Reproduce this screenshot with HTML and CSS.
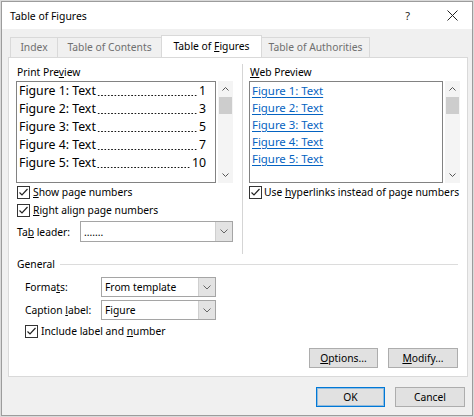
FILE: index.html
```html
<!DOCTYPE html>
<html lang="en">
<head>
    <meta charset="UTF-8">
    <title>Table of Figures</title>
    <link rel="stylesheet" href="styles.css">
</head>
<body>
    <div class="dialog">
        <div class="title-bar">
            <span class="title">Table of Figures</span>
            <div class="title-buttons">
                <span class="help">?</span>
                <svg class="close" width="11" height="11" viewBox="0 0 11 11">
                    <path d="M0.5 0.5L10.5 10.5M10.5 0.5L0.5 10.5" stroke="#222" stroke-width="1" fill="none"/>
                </svg>
            </div>
        </div>

        <div class="dialog-body">
            <div class="tabs">
                <div class="tab tab-index">Index</div>
                <div class="tab tab-contents">Table of Contents</div>
                <div class="tab tab-figures active">Table of <u>F</u>igures</div>
                <div class="tab tab-authorities">Table of Authorities</div>
            </div>

            <div class="panel">
                <div class="previews">
                    <div class="preview-col print-col">
                        <div class="label">Print Pre<u>v</u>iew</div>
                        <div class="preview-box">
                            <div class="list print-list">
                                <div class="entry"><span>Figure 1: Text</span><span class="leader"></span><span>1</span></div>
                                <div class="entry"><span>Figure 2: Text</span><span class="leader"></span><span>3</span></div>
                                <div class="entry"><span>Figure 3: Text</span><span class="leader"></span><span>5</span></div>
                                <div class="entry"><span>Figure 4: Text</span><span class="leader"></span><span>7</span></div>
                                <div class="entry"><span>Figure 5: Text</span><span class="leader"></span><span>10</span></div>
                            </div>
                            <div class="scrollbar">
                                <div class="scroll-btn">
                                    <svg width="7" height="4" viewBox="0 0 7 4"><polyline points="0.5,3.5 3.5,0.5 6.5,3.5" stroke="#555" fill="none"/></svg>
                                </div>
                                <div class="scroll-thumb"></div>
                                <div class="scroll-track"></div>
                                <div class="scroll-btn">
                                    <svg width="7" height="4" viewBox="0 0 7 4"><polyline points="0.5,0.5 3.5,3.5 6.5,0.5" stroke="#555" fill="none"/></svg>
                                </div>
                            </div>
                        </div>
                        <div class="check-row">
                            <svg class="checkbox" width="13" height="13" viewBox="0 0 13 13"><rect x="0.5" y="0.5" width="12" height="12" fill="#fff" stroke="#333"/><polyline points="2.5,6.5 5,9 10.5,3" stroke="#222" stroke-width="1.2" fill="none"/></svg>
                            <span><u>S</u>how page numbers</span>
                        </div>
                        <div class="check-row">
                            <svg class="checkbox" width="13" height="13" viewBox="0 0 13 13"><rect x="0.5" y="0.5" width="12" height="12" fill="#fff" stroke="#333"/><polyline points="2.5,6.5 5,9 10.5,3" stroke="#222" stroke-width="1.2" fill="none"/></svg>
                            <span><u>R</u>ight align page numbers</span>
                        </div>
                        <div class="leader-row">
                            <span class="leader-label">Ta<u>b</u> leader:</span>
                            <div class="select">
                                <span class="select-value">.......</span>
                                <span class="select-arrow">
                                    <svg width="8" height="5" viewBox="0 0 8 5"><polyline points="0.5,0.5 4,4 7.5,0.5" stroke="#666" fill="none"/></svg>
                                </span>
                            </div>
                        </div>
                    </div>

                    <div class="preview-col web-col">
                        <div class="label"><u>W</u>eb Preview</div>
                        <div class="preview-box">
                            <div class="list web-list">
                                <div class="link">Figure 1: Text</div>
                                <div class="link">Figure 2: Text</div>
                                <div class="link">Figure 3: Text</div>
                                <div class="link">Figure 4: Text</div>
                                <div class="link">Figure 5: Text</div>
                            </div>
                            <div class="scrollbar">
                                <div class="scroll-btn">
                                    <svg width="7" height="4" viewBox="0 0 7 4"><polyline points="0.5,3.5 3.5,0.5 6.5,3.5" stroke="#555" fill="none"/></svg>
                                </div>
                                <div class="scroll-thumb"></div>
                                <div class="scroll-track"></div>
                                <div class="scroll-btn">
                                    <svg width="7" height="4" viewBox="0 0 7 4"><polyline points="0.5,0.5 3.5,3.5 6.5,0.5" stroke="#555" fill="none"/></svg>
                                </div>
                            </div>
                        </div>
                        <div class="check-row web-check">
                            <svg class="checkbox" width="13" height="13" viewBox="0 0 13 13"><rect x="0.5" y="0.5" width="12" height="12" fill="#fff" stroke="#333"/><polyline points="2.5,6.5 5,9 10.5,3" stroke="#222" stroke-width="1.2" fill="none"/></svg>
                            <span>Use <u>h</u>yperlinks instead of page numbers</span>
                        </div>
                    </div>
                </div>

                <div class="general">
                    <div class="group-title">
                        <span>General</span>
                        <div class="rule"></div>
                    </div>
                    <div class="field-row">
                        <span class="field-label">Forma<u>t</u>s:</span>
                        <div class="select small">
                            <span class="select-value">From template</span>
                            <span class="select-arrow">
                                <svg width="8" height="5" viewBox="0 0 8 5"><polyline points="0.5,0.5 4,4 7.5,0.5" stroke="#666" fill="none"/></svg>
                            </span>
                        </div>
                    </div>
                    <div class="field-row">
                        <span class="field-label">Caption <u>l</u>abel:</span>
                        <div class="select small">
                            <span class="select-value">Figure</span>
                            <span class="select-arrow">
                                <svg width="8" height="5" viewBox="0 0 8 5"><polyline points="0.5,0.5 4,4 7.5,0.5" stroke="#666" fill="none"/></svg>
                            </span>
                        </div>
                    </div>
                    <div class="check-row indent">
                        <svg class="checkbox" width="13" height="13" viewBox="0 0 13 13"><rect x="0.5" y="0.5" width="12" height="12" fill="#fff" stroke="#333"/><polyline points="2.5,6.5 5,9 10.5,3" stroke="#222" stroke-width="1.2" fill="none"/></svg>
                        <span>Include label and <u>n</u>umber</span>
                    </div>
                </div>

                <div class="panel-buttons">
                    <button class="btn"><u>O</u>ptions...</button>
                    <button class="btn wide"><u>M</u>odify...</button>
                </div>
            </div>

            <div class="dialog-buttons">
                <button class="btn default">OK</button>
                <button class="btn wide">Cancel</button>
            </div>
        </div>
    </div>
</body>
</html>
```

FILE: styles.css
```css
* {
    margin: 0;
    padding: 0;
    box-sizing: border-box;
}

body {
    background: #dadada;
    font-family: "Noto Sans", "Open Sans", sans-serif;
    font-size: 10.3px;
    color: #000;
    padding: 1px;
}

u {
    text-underline-offset: 1px;
}

.dialog {
    width: 472px;
    height: 415px;
    background: #f0f0f0;
    border: 1px solid #9c9c9c;
    display: flex;
    flex-direction: column;
}

/* title bar */
.title-bar {
    height: 27px;
    background: #ffffff;
    display: flex;
    align-items: center;
    justify-content: space-between;
    padding-left: 8px;
    padding-right: 14px;
}

.title {
    font-size: 10.4px;
}

.title-buttons {
    display: flex;
    align-items: center;
    gap: 37px;
}

.help {
    font-size: 11px;
    color: #222;
}

/* body */
.dialog-body {
    flex: 1;
    display: flex;
    flex-direction: column;
    padding: 0 4px 0 6px;
}

.tabs {
    display: flex;
    height: 20px;
    margin: 8px 0 0 2px;
}

.tab {
    height: 20px;
    line-height: 19px;
    text-align: center;
    border: 1px solid #d9d9d9;
    border-bottom: none;
    margin-left: -1px;
    color: #6f6f6f;
    background: #f0f0f0;
    white-space: nowrap;
}

.tab-index {
    width: 48px;
    margin-left: 0;
}

.tab-contents {
    width: 105px;
}

.tab-figures {
    width: 101px;
}

.tab-authorities {
    width: 109px;
}

.tab.active {
    height: 22px;
    line-height: 21px;
    margin-top: -2px;
    margin-bottom: -1px;
    background: #ffffff;
    color: #000;
    position: relative;
    z-index: 1;
}

.panel {
    height: 320px;
    background: #ffffff;
    border: 1px solid #d9d9d9;
    padding: 6px 7px 8px 7px;
    display: flex;
    flex-direction: column;
}

.previews {
    display: grid;
    grid-template-columns: 217px 1fr;
    column-gap: 9px;
}

.preview-col {
    display: flex;
    flex-direction: column;
}

.print-col {
    padding-bottom: 12px;
}

.web-col {
    border-left: 1px solid #d5d5d5;
    padding-left: 6px;
}

.label {
    height: 16px;
    line-height: 16px;
    padding-left: 1px;
}

.preview-box {
    display: flex;
    gap: 2px;
    height: 102px;
    margin-top: 1px;
}

.list {
    flex: 1;
    min-width: 0;
    border: 1px solid #828282;
    background: #ffffff;
    overflow: hidden;
}

.print-list .entry {
    display: flex;
    height: 18px;
    line-height: 18px;
    font-size: 12.3px;
    padding: 0 9px 0 2px;
    white-space: nowrap;
}

/* dotted tab leader between caption and page number */
.print-list .leader {
    flex: 1;
    margin: 0 1px 0 1px;
    background-image: linear-gradient(to right, #1a1a1a 1.4px, transparent 1.4px);
    background-size: 3.35px 1.4px;
    background-repeat: repeat-x;
    background-position: right 0 bottom 4px;
}

.web-list .link {
    height: 17px;
    line-height: 17px;
    font-size: 11.4px;
    padding-left: 2px;
    color: #0563c1;
    text-decoration: underline;
    text-underline-offset: 2px;
}

.scrollbar {
    width: 15px;
    background: #f4f4f4;
    display: flex;
    flex-direction: column;
}

.scroll-btn {
    height: 16px;
    display: flex;
    align-items: center;
    justify-content: center;
}

.scroll-thumb {
    height: 17px;
    background: #cdcdcd;
    margin: 0 1px;
}

.scroll-track {
    flex: 1;
}

.check-row {
    display: flex;
    align-items: center;
    gap: 3px;
    height: 18px;
    padding-left: 1px;
}

.web-check {
    padding-left: 0;
    gap: 2px;
}

.check-row.indent {
    padding-left: 9px;
    margin-top: 2px;
}

.checkbox {
    flex-shrink: 0;
}

.leader-row {
    display: flex;
    align-items: center;
    height: 21px;
    margin-top: 2px;
}

.leader-label {
    width: 64px;
    padding-left: 1px;
}

.select {
    flex: 1;
    height: 21px;
    border: 1px solid #a5a5a5;
    background: #ffffff;
    display: flex;
    align-items: center;
    padding-left: 3px;
}

.select.small {
    flex: none;
    width: 115px;
    height: 20px;
}

.select-arrow {
    margin-left: auto;
    width: 17px;
    height: 100%;
    background: #e3e3e3;
    border-left: 1px solid #cfcfcf;
    display: flex;
    align-items: center;
    justify-content: center;
}

/* general group */
.group-title {
    display: flex;
    align-items: center;
    gap: 5px;
    height: 16px;
    margin-top: 2px;
    padding-left: 1px;
}

.rule {
    flex: 1;
    height: 1px;
    background: #dcdcdc;
    margin-right: 2px;
}

.field-row {
    display: flex;
    align-items: center;
    padding-left: 9px;
    margin-top: 3px;
}

.group-title + .field-row {
    margin-top: 5px;
}

.field-label {
    width: 76px;
}

/* buttons */
.btn {
    width: 69px;
    height: 20px;
    background: #e1e1e1;
    border: 1px solid #adadad;
    font-family: inherit;
    font-size: 10.3px;
    color: #000;
}

.btn.wide {
    width: 70px;
}

.btn.default {
    border-color: #0078d7;
    box-shadow: inset 0 0 0 1px rgba(0, 120, 215, 0.35);
}

.panel-buttons {
    margin-top: auto;
    display: flex;
    justify-content: flex-end;
    gap: 10px;
    padding-right: 2px;
}

.dialog-buttons {
    display: flex;
    justify-content: flex-end;
    gap: 10px;
    margin-top: 10px;
    padding-right: 3px;
}
```
